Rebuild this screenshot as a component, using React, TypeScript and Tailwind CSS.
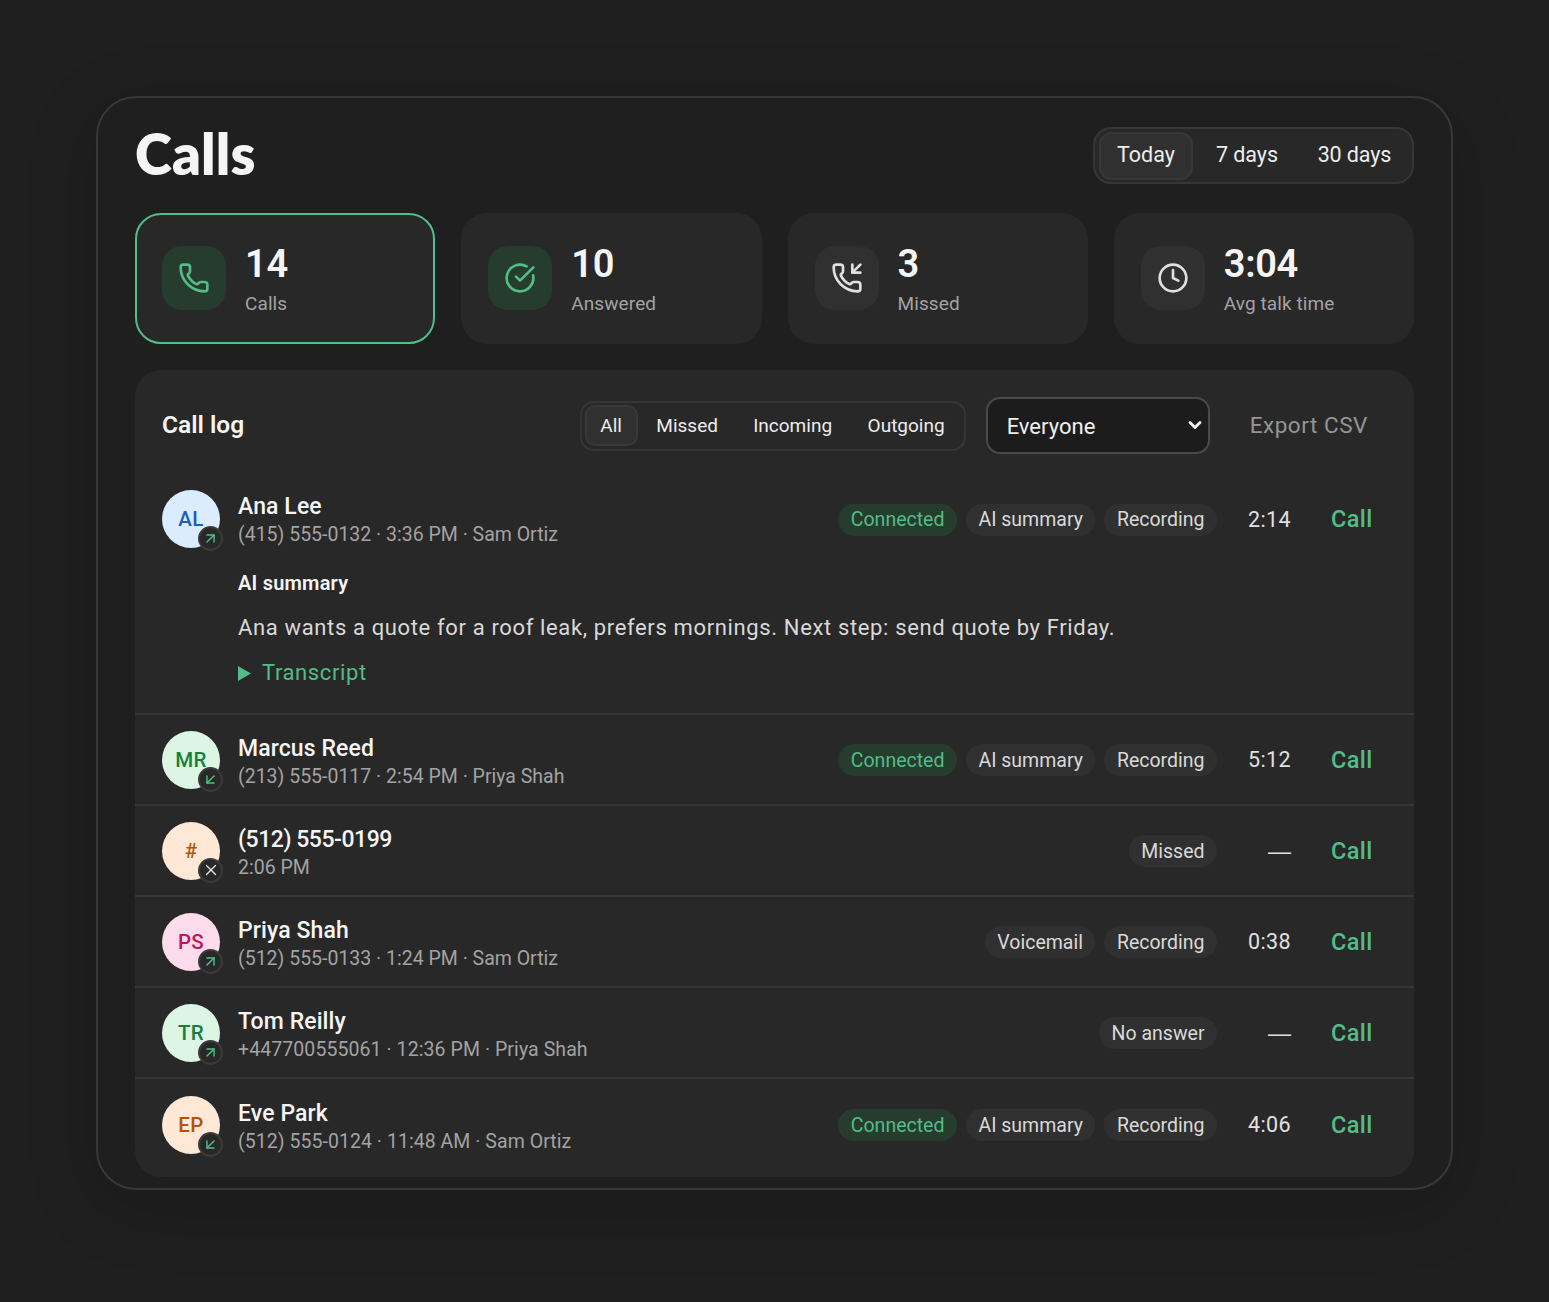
import React from "react";
import { Phone, CircleCheckBig, PhoneIncoming, Clock, ArrowUpRight, ArrowDownLeft, X, ChevronDown } from "lucide-react";

const stats = [
  { n: "14", l: "Calls", Icon: Phone, green: true, active: true },
  { n: "10", l: "Answered", Icon: CircleCheckBig, green: true },
  { n: "3", l: "Missed", Icon: PhoneIncoming },
  { n: "3:04", l: "Avg talk time", Icon: Clock },
];

type Row = {
  ini: string; bg: string; fg: string; dir: "out" | "in" | "miss";
  name: string; sub: string; tags: string[]; dur: string; phone?: boolean; subCls?: string;
};

const rows: Row[] = [
  { ini: "MR", bg: "bg-[#dcf5e4]", fg: "text-[#15803d]", dir: "in", name: "Marcus Reed", sub: "(213) 555-0117 · 2:54 PM · Priya Shah", tags: ["Connected", "AI summary", "Recording"], dur: "5:12" },
  { ini: "#", bg: "bg-[#ffe9d6]", fg: "text-[#b45309]", dir: "miss", name: "(512) 555-0199", sub: "2:06 PM", tags: ["Missed"], dur: "—", phone: true },
  { ini: "PS", bg: "bg-[#fcdcec]", fg: "text-[#be185d]", dir: "out", name: "Priya Shah", sub: "(512) 555-0133 · 1:24 PM · Sam Ortiz", tags: ["Voicemail", "Recording"], dur: "0:38" },
  { ini: "TR", bg: "bg-[#dcf5e4]", fg: "text-[#15803d]", dir: "out", name: "Tom Reilly", sub: "+447700555061 · 12:36 PM · Priya Shah", tags: ["No answer"], dur: "—", subCls: "tracking-[0.08px]" },
  { ini: "EP", bg: "bg-[#ffe9d6]", fg: "text-[#b45309]", dir: "in", name: "Eve Park", sub: "(512) 555-0124 · 11:48 AM · Sam Ortiz", tags: ["Connected", "AI summary", "Recording"], dur: "4:06", subCls: "tracking-[0.05px]" },
];

function Avatar({ ini, bg, fg, dir }: { ini: string; bg: string; fg: string; dir: Row["dir"] }) {
  return (
    <div className={`relative w-[58px] h-[58px] shrink-0 rounded-full flex items-center justify-center pt-[1px] text-[20.5px] tracking-[0.3px] font-medium ${bg} ${fg}`}>
      {ini}
      <span className="absolute right-[-3px] bottom-[-3px] w-[25px] h-[25px] rounded-full bg-[#282828] border-2 border-[#3a3a3a] flex items-center justify-center">
        {dir === "out" && <ArrowUpRight size={17} strokeWidth={2} className="text-[#4fbf87]" />}
        {dir === "in" && <ArrowDownLeft size={17} strokeWidth={2} className="text-[#4fbf87]" />}
        {dir === "miss" && <X size={18} strokeWidth={1.8} className="text-[#e8e8e8]" />}
      </span>
    </div>
  );
}

function Tag({ t }: { t: string }) {
  const c = t === "Connected" ? "bg-[#263c2f] text-[#52bd86]" : "bg-[#303030] text-[#d9d9d9]";
  return <span className={`h-[32px] px-[12.5px] pt-[1px] rounded-full flex items-center text-[19.5px] ${c}`}>{t}</span>;
}

function RowRight({ tags, dur }: { tags: string[]; dur: string }) {
  return (
    <div className="ml-auto flex items-center pt-[1px]">
      <div className="flex gap-[9px]">{tags.map((t) => <Tag key={t} t={t} />)}</div>
      {dur === "—" ? (
        <span className="w-[74px] text-right text-[23px] text-[#e0e0e0] font-['Liberation_Sans',sans-serif]">{dur}</span>
      ) : (
        <span className="w-[74px] pt-[1px] text-right text-[21.5px] text-[#e0e0e0] tracking-[0.4px]">{dur}</span>
      )}
      <span className="ml-[40px] mr-[14px] pt-[1px] text-[23.5px] font-[480] text-[#52bd86] w-[42px] tracking-[0.4px]">Call</span>
    </div>
  );
}

function RowText({ name, sub, phone, first, subCls }: { name: string; sub: string; phone?: boolean; first?: boolean; subCls?: string }) {
  return (
    <div className={`min-w-0 ${first ? "pt-[1px]" : "pt-[4px]"}`}>
      <div className={`text-[23px] leading-[29px] font-[480] text-[#f5f5f5] ${phone ? "tracking-[-0.45px]" : "tracking-[0.1px]"}`}>{name}</div>
      <div className={`text-[19.5px] leading-[27px] text-[#a3a3a3] ${subCls ?? ""}`}>{sub}</div>
    </div>
  );
}

export default function App() {
  return (
    <div className="min-h-[1302px] bg-[#1f1f1f] pt-[96px] pb-[112px] px-[96px] font-['Roboto',sans-serif]">
      <div className="h-[1094px] rounded-[40px] border-2 border-[#383838] bg-[#1f1f1f] px-[37px] pt-[29px] shadow-[0_16px_70px_rgba(0,0,0,0.18)]">
        <div className="flex items-center justify-between h-[57px]">
          <h1 className="pb-[4px] text-[56px] font-extrabold text-[#f5f5f5] tracking-[0.2px] font-['Lato',sans-serif]">Calls</h1>
          <div className="flex h-[57px] items-center pl-[4px] rounded-[18px] border-2 border-[#363636] bg-[#282828] text-[21.5px] text-[#ededed]">
            <span className="h-[48px] w-[94px] flex items-center justify-center rounded-[13px] bg-[#303030] border-2 border-[#383838]">Today</span>
            <span className="ml-[1px] w-[106px] text-center tracking-[-0.05px]">7 days</span>
            <span className="ml-[1px] w-[107px] text-center mr-[4px] tracking-[-0.1px]">30 days</span>
          </div>
        </div>

        <div className="mt-[29px] grid grid-cols-4 gap-[26px]">
          {stats.map(({ n, l, Icon, green, active }) => (
            <div key={l} className={`h-[131px] rounded-[26px] bg-[#282828] px-[25px] flex items-center gap-[19px] border-2 ${active ? "border-[#52bd86]" : "border-transparent"}`}>
              <div className={`w-[64px] h-[64px] mb-[1px] rounded-[20px] flex items-center justify-center ${green ? "bg-[#263c2f] text-[#52bd86]" : "bg-[#303030] text-[#e0e0e0]"}`}>
                <Icon size={32} strokeWidth={2} />
              </div>
              <div className="pt-[2px]">
                <div className="text-[38px] leading-[44px] font-semibold text-[#f5f5f5] tracking-[-0.3px]">{n}</div>
                <div className="mt-[4px] text-[19px] leading-[28px] text-[#a3a3a3] tracking-[0.1px]">{l}</div>
              </div>
            </div>
          ))}
        </div>

        <div className="mt-[26px] h-[807px] rounded-[26px] bg-[#282828] overflow-hidden">
          <div className="flex items-center h-[111px] px-[27px]">
            <h2 className="text-[24.5px] font-semibold text-[#f5f5f5]">Call log</h2>
            <div className="ml-auto flex h-[50px] items-center pl-[3px] rounded-[14px] border-2 border-[#363636] text-[19px] text-[#ededed]">
              <span className="h-[41px] w-[53px] pt-[1px] flex items-center justify-center rounded-[10px] bg-[#303030] border-2 border-[#383838]">All</span>
              <span className="w-[99px] pt-[1px] text-center">Missed</span>
              <span className="w-[112px] pt-[1px] text-center">Incoming</span>
              <span className="w-[115px] pt-[1px] text-center">Outgoing</span>
            </div>
            <div className="relative ml-[20px]">
              <select className="block appearance-none h-[57px] w-[224px] rounded-[14px] border-2 border-[#4a4a4a] bg-[#1c1c1c] pl-[19px] pt-[2px] text-[22px] text-[#f0f0f0] outline-none">
                <option>Everyone</option>
              </select>
              <ChevronDown size={20} strokeWidth={3.4} className="absolute right-[5px] top-[18px] text-[#f0f0f0]" />
            </div>
            <span className="ml-[40px] mr-[19px] pt-[1px] text-[22.5px] text-[#959595] tracking-[0.55px]">Export CSV</span>
          </div>

          <div className="h-[234px] border-b-2 border-[#363636] px-[27px]">
            <div className="flex items-center h-[76px] gap-[18px]">
              <Avatar ini="AL" bg="bg-[#dcecff]" fg="text-[#1d5fb4]" dir="out" />
              <RowText name="Ana Lee" sub="(415) 555-0132 · 3:36 PM · Sam Ortiz" first />
              <RowRight tags={["Connected", "AI summary", "Recording"]} dur="2:14" />
            </div>
            <div className="pl-[76px]">
              <div className="mt-[13px] text-[20px] leading-[26px] font-semibold text-[#f5f5f5] tracking-[0.2px]">AI summary</div>
              <div className="mt-[18px] text-[22px] leading-[28px] text-[#d9d9d9] tracking-[0.64px]">Ana wants a quote for a roof leak, prefers mornings. Next step: send quote by Friday.</div>
              <div className="mt-[17px] flex items-center gap-[11px] text-[22px] leading-[28px] text-[#52bd86] tracking-[0.6px]">
                <svg width="13" height="15" viewBox="0 0 13 15" className="fill-[#52bd86]"><polygon points="0,0 13,7.5 0,15" /></svg>
                Transcript
              </div>
            </div>
          </div>

          {rows.map((r, i) => (
            <div key={r.name} className={`h-[91px] flex items-center gap-[18px] px-[27px] ${i < rows.length - 1 ? "border-b-2 border-[#363636]" : ""}`}>
              <Avatar ini={r.ini} bg={r.bg} fg={r.fg} dir={r.dir} />
              <RowText name={r.name} sub={r.sub} phone={r.phone} subCls={r.subCls} />
              <RowRight tags={r.tags} dur={r.dur} />
            </div>
          ))}
        </div>
      </div>
    </div>
  );
}
